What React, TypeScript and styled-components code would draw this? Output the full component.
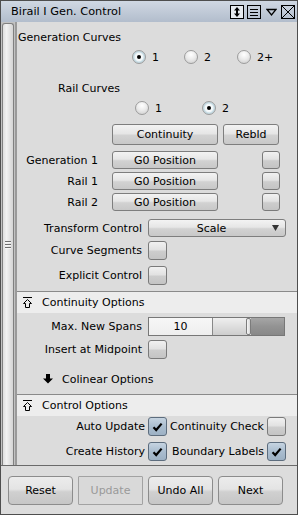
import React from 'react';
import styled, { createGlobalStyle } from 'styled-components';

const Global = createGlobalStyle`
  html, body { margin: 0; padding: 0; background: #ffffff; }
  body { font-family: "DejaVu Sans", sans-serif; font-size: 11px; color: #000; }
  * { box-sizing: border-box; }
`;

const Window = styled.div`
  width: 298px;
  height: 515px;
  border: 1px solid #4e4e4e;
  background: #dcdcdc;
  display: flex;
  flex-direction: column;
  font-family: "DejaVu Sans", sans-serif;
  font-size: 11px;
  color: #000;
`;

const TitleBar = styled.div`
  height: 21px;
  flex: none;
  display: flex;
  align-items: center;
  padding: 0 2px 0 10px;
  background: linear-gradient(#d0d8e3, #b2bdcc);
`;

const Title = styled.div`
  flex: 1;
  font-size: 11.3px;
  white-space: nowrap;
`;

const TitleIcon = styled.svg<{ $ml: number }>`
  flex: none;
  margin-left: ${p => p.$ml}px;
  display: block;
`;

const Body = styled.div`
  flex: 1;
  display: flex;
  min-height: 0;
`;

const SideStrip = styled.div`
  width: 16px;
  flex: none;
  display: flex;
  padding: 1px 1px 0 1px;
  background: #c2c2c2;
  border-right: 2px solid #9a9a9a;
`;

const Handle = styled.div`
  flex: 1;
  border: 1px solid #808080;
  border-bottom: none;
  border-radius: 3px 3px 0 0;
  background: linear-gradient(90deg, #dedede, #f1f1f1 35%, #d4d4d4);
  display: flex;
  flex-direction: column;
  align-items: center;
  justify-content: center;
  gap: 2px;
`;

const GripLine = styled.div`
  width: 6px;
  height: 1px;
  background: #6e6e6e;
  box-shadow: 0 1px 0 #f6f6f6;
`;

const Content = styled.div`
  flex: 1;
  display: flex;
  flex-direction: column;
  min-width: 0;
`;

const Section = styled.div<{ $pt?: number; $pb?: number; $top?: boolean; $grow?: boolean }>`
  display: flex;
  flex-direction: column;
  padding-top: ${p => p.$pt ?? 0}px;
  padding-bottom: ${p => p.$pb ?? 0}px;
  border-top: ${p => (p.$top ? '1px solid #8a8a8a' : 'none')};
  flex: ${p => (p.$grow ? 1 : 'none')};
`;

const SectionHeader = styled.div`
  height: 21px;
  display: flex;
  align-items: center;
  padding-left: 6px;
  gap: 10px;
  background: #ededed;
`;

const Row = styled.div<{ $h: number; $mt?: number; $pl?: number; $gap?: number }>`
  height: ${p => p.$h}px;
  margin-top: ${p => p.$mt ?? 0}px;
  padding-left: ${p => p.$pl ?? 0}px;
  display: flex;
  align-items: center;
  gap: ${p => p.$gap ?? 0}px;
  white-space: nowrap;
`;

const GenRow = styled.div<{ $mt: number }>`
  height: 18px;
  margin-top: ${p => p.$mt}px;
  display: grid;
  grid-template-columns: 81px 106px 18px;
  column-gap: 0;
  align-items: center;
  white-space: nowrap;
  & > :nth-child(2) { margin-left: 14px; }
  & > :nth-child(3) { margin-left: 58px; }
`;

const RadioGrid = styled.div<{ $h: number; $mt?: number; $pl: number; $cols: string }>`
  height: ${p => p.$h}px;
  margin-top: ${p => p.$mt ?? 0}px;
  padding-left: ${p => p.$pl}px;
  display: grid;
  grid-template-columns: ${p => p.$cols};
  align-items: center;
`;

const RadioItem = styled.label`
  display: flex;
  align-items: center;
  gap: 6px;
`;

const RadioCircle = styled.span<{ $on?: boolean }>`
  width: 14px;
  height: 14px;
  border-radius: 50%;
  border: 1px solid #9c9c9c;
  display: flex;
  align-items: center;
  justify-content: center;
  background: ${p =>
    p.$on
      ? 'radial-gradient(circle at 50% 50%, #ffffff 0, #f2f7f9 45%, #c6dbe3 60%, #b3c9d2 100%)'
      : 'radial-gradient(circle at 50% 30%, #ffffff 0, #ececec 45%, #cacaca 100%)'};
  &::after {
    content: '';
    width: 4px;
    height: 4px;
    border-radius: 50%;
    background: #000;
    display: ${p => (p.$on ? 'block' : 'none')};
  }
`;

const Label = styled.div<{ $w: number }>`
  width: ${p => p.$w}px;
  flex: none;
  text-align: right;
`;

const Button = styled.div<{ $w: number }>`
  width: ${p => p.$w}px;
  height: 100%;
  flex: none;
  border: 1px solid #7e7e7e;
  border-radius: 3px;
  background: linear-gradient(#f3f3f3, #e6e6e6 45%, #d2d2d2 55%, #c8c8c8);
  display: flex;
  align-items: center;
  justify-content: center;
`;

const Box = styled.div<{ $size: number; $checked?: boolean }>`
  width: ${p => p.$size}px;
  height: ${p => p.$size}px;
  flex: none;
  border: 1px solid ${p => (p.$checked ? '#5d6d7e' : '#7a7a7a')};
  border-radius: 3px;
  background: ${p =>
    p.$checked
      ? 'linear-gradient(#c6d4e1, #aabdcf 50%, #9db1c4)'
      : 'linear-gradient(#f1f1f1, #e2e2e2 45%, #cdcdcd 55%, #c4c4c4)'};
  display: flex;
  align-items: center;
  justify-content: center;
`;

const Dropdown = styled.div`
  width: 138px;
  height: 100%;
  flex: none;
  border: 1px solid #7e7e7e;
  border-radius: 3px;
  background: linear-gradient(#f3f3f3, #e6e6e6 45%, #d2d2d2 55%, #c8c8c8);
  display: flex;
  align-items: center;
  padding-right: 6px;
`;

const DropText = styled.div`
  flex: 1;
  text-align: center;
  padding-left: 2px;
`;

const SliderGroup = styled.div`
  display: flex;
  height: 100%;
  border: 1px solid #777;
`;

const Field = styled.div`
  width: 64px;
  background: linear-gradient(#f7f7f7, #eeeeee);
  border-right: 1px solid #888;
  display: flex;
  align-items: center;
  justify-content: center;
`;

const Track = styled.div<{ $dark?: boolean; $w: number }>`
  width: ${p => p.$w}px;
  background: ${p =>
    p.$dark
      ? 'linear-gradient(#a6a6a6, #939393 50%, #888888)'
      : 'linear-gradient(#efefef, #dedede 50%, #cdcdcd)'};
`;

const Thumb = styled.div`
  width: 5px;
  border: 1px solid #7c7c7c;
  border-radius: 2px;
  background: linear-gradient(90deg, #f6f6f6, #d9d9d9);
`;

const Footer = styled.div`
  height: 49px;
  flex: none;
  border-top: 1px solid #6a6a6a;
  display: flex;
  gap: 5px;
  padding: 10px 0 0 7px;
`;

const FooterButton = styled.div<{ $disabled?: boolean }>`
  width: 65px;
  height: 29px;
  border: 1px solid ${p => (p.$disabled ? '#a2a2a2' : '#8c8c8c')};
  border-radius: ${p => (p.$disabled ? '1px' : '4px')};
  background: ${p =>
    p.$disabled ? '#d9d9d9' : 'linear-gradient(#ececec, #e4e4e4 45%, #d0d0d0 55%, #c6c6c6)'};
  color: ${p => (p.$disabled ? '#9a9a9a' : '#000')};
  display: flex;
  align-items: center;
  justify-content: center;
`;

const Check = () => (
  <svg width="11" height="10" viewBox="0 0 11 10">
    <path d="M1.5 5.2 L4.2 8 L9.6 1.6" fill="none" stroke="#000" strokeWidth="2.2" />
  </svg>
);

const CollapseIcon = () => (
  <svg width="9" height="11" viewBox="0 0 9 11">
    <line x1="0" y1="0.5" x2="9" y2="0.5" stroke="#000" strokeWidth="1" />
    <path d="M4.5 2.5 L8.5 6.5 L6.5 6.5 L6.5 10.5 L2.5 10.5 L2.5 6.5 L0.5 6.5 Z" fill="none" stroke="#000" strokeWidth="1" />
  </svg>
);

const DownArrow = () => (
  <svg width="10" height="10" viewBox="0 0 10 10">
    <path d="M3 0 L7 0 L7 4.5 L10 4.5 L5 9.5 L0 4.5 L3 4.5 Z" fill="#000" />
  </svg>
);

const Radio = ({ label, on }: { label: string; on?: boolean }) => (
  <RadioItem>
    <RadioCircle $on={on} />
    <span>{label}</span>
  </RadioItem>
);

const CheckBox = ({ checked, size = 19 }: { checked?: boolean; size?: number }) => (
  <Box $size={size} $checked={checked}>{checked ? <Check /> : null}</Box>
);

const GenLine = ({ label, mt }: { label: string; mt: number }) => (
  <GenRow $mt={mt}>
    <Label $w={81}>{label}</Label>
    <Button $w={106}>G0 Position</Button>
    <CheckBox size={18} />
  </GenRow>
);

export default function App() {
  return (
    <>
      <Global />
      <Window>
        <TitleBar>
          <Title>Birail I Gen. Control</Title>
          <TitleIcon $ml={0} width="14" height="14" viewBox="0 0 14 14">
            <rect x="0.5" y="0.5" width="13" height="13" fill="#e6eaef" stroke="#000" />
            <path d="M7 2 L10 5.5 L4 5.5 Z M4 8.5 L10 8.5 L7 12 Z" fill="#000" />
            <rect x="6" y="5" width="2" height="4" fill="#000" />
          </TitleIcon>
          <TitleIcon $ml={3} width="14" height="14" viewBox="0 0 14 14">
            <rect x="0.5" y="0.5" width="13" height="13" fill="none" stroke="#000" />
            <path d="M3 4.5 H11 M3 7.5 H11 M3 10.5 H11" stroke="#000" strokeWidth="1" />
          </TitleIcon>
          <TitleIcon $ml={5} width="11" height="14" viewBox="0 0 11 14">
            <path d="M1 4.5 L10 4.5 L5.5 10 Z" fill="none" stroke="#000" strokeWidth="1.3" />
          </TitleIcon>
          <TitleIcon $ml={4} width="14" height="14" viewBox="0 0 14 14">
            <rect x="0.5" y="0.5" width="13" height="13" fill="none" stroke="#000" />
            <path d="M1 1 L13 13 M13 1 L1 13" stroke="#000" strokeWidth="1" />
          </TitleIcon>
        </TitleBar>
        <Body>
          <SideStrip>
            <Handle>
              <GripLine />
              <GripLine />
              <GripLine />
            </Handle>
          </SideStrip>
          <Content>
            <Section $pt={5} $pb={6}>
              <Row $h={20} $pl={1}>Generation Curves</Row>
              <RadioGrid $h={20} $pl={115} $cols="52px 53px auto">
                <Radio label="1" on />
                <Radio label="2" />
                <Radio label="2+" />
              </RadioGrid>
              <Row $h={20} $mt={11} $pl={41}>Rail Curves</Row>
              <RadioGrid $h={20} $pl={118} $cols="67px auto">
                <Radio label="1" />
                <Radio label="2" on />
              </RadioGrid>
              <Row $h={21} $mt={6} $pl={95} $gap={5}>
                <Button $w={106}>Continuity</Button>
                <Button $w={56}>Rebld</Button>
              </Row>
              <GenLine label="Generation 1" mt={6} />
              <GenLine label="Rail 1" mt={3} />
              <GenLine label="Rail 2" mt={3} />
              <Row $h={18} $mt={8} $gap={6}>
                <Label $w={125}>Transform Control</Label>
                <Dropdown>
                  <DropText>Scale</DropText>
                  <svg width="7" height="6" viewBox="0 0 7 6">
                    <path d="M0 0 L7 0 L3.5 6 Z" fill="#333" />
                  </svg>
                </Dropdown>
              </Row>
              <Row $h={19} $mt={4} $gap={6}>
                <Label $w={125}>Curve Segments</Label>
                <CheckBox />
              </Row>
              <Row $h={19} $mt={6} $gap={6}>
                <Label $w={125}>Explicit Control</Label>
                <CheckBox />
              </Row>
            </Section>
            <Section $top $pb={5}>
              <SectionHeader>
                <CollapseIcon />
                <span>Continuity Options</span>
              </SectionHeader>
              <Row $h={19} $mt={4} $gap={6}>
                <Label $w={125}>Max. New Spans</Label>
                <SliderGroup>
                  <Field>10</Field>
                  <Track $w={33} />
                  <Thumb />
                  <Track $w={33} $dark />
                </SliderGroup>
              </Row>
              <Row $h={19} $mt={4} $gap={6}>
                <Label $w={125}>Insert at Midpoint</Label>
                <CheckBox />
              </Row>
              <Row $h={20} $mt={10} $pl={26} $gap={9}>
                <DownArrow />
                <span>Colinear Options</span>
              </Row>
            </Section>
            <Section $top $grow>
              <SectionHeader>
                <CollapseIcon />
                <span>Control Options</span>
              </SectionHeader>
              <Row $h={19} $mt={1} $gap={3}>
                <Label $w={128}>Auto Update</Label>
                <CheckBox checked />
                <Label $w={94}>Continuity Check</Label>
                <CheckBox />
              </Row>
              <Row $h={19} $mt={6} $gap={3}>
                <Label $w={128}>Create History</Label>
                <CheckBox checked />
                <Label $w={94}>Boundary Labels</Label>
                <CheckBox checked />
              </Row>
            </Section>
          </Content>
        </Body>
        <Footer>
          <FooterButton>Reset</FooterButton>
          <FooterButton $disabled>Update</FooterButton>
          <FooterButton>Undo All</FooterButton>
          <FooterButton>Next</FooterButton>
        </Footer>
      </Window>
    </>
  );
}
